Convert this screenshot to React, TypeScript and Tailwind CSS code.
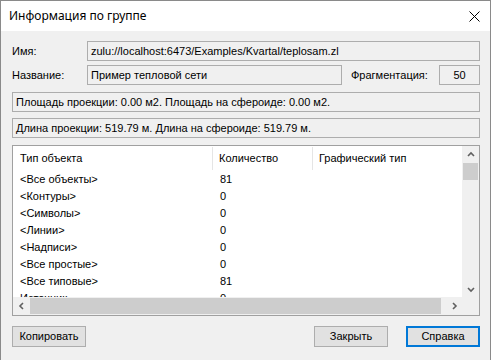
import React from "react";

const rows = [
  { name: "<Все объекты>", count: "81" },
  { name: "<Контуры>", count: "0" },
  { name: "<Символы>", count: "0" },
  { name: "<Линии>", count: "0" },
  { name: "<Надписи>", count: "0" },
  { name: "<Все простые>", count: "0" },
  { name: "<Все типовые>", count: "81" },
  { name: "Источник", count: "0" },
];

// small windows-10 style scrollbar arrow
function Arrow({ dir }: { dir: "up" | "down" | "left" | "right" }) {
  const pts = {
    up: "1,5 4,2 7,5",
    down: "1,3 4,6 7,3",
    left: "5,1 2,4 5,7",
    right: "3,1 6,4 3,7",
  }[dir];
  return (
    <svg width="8" height="8" viewBox="0 0 8 8">
      <polyline points={pts} fill="none" stroke="#606060" strokeWidth="1.6" />
    </svg>
  );
}

function Field({ children, className = "" }: { children?: React.ReactNode; className?: string }) {
  return (
    <div className={"h-[20px] flex items-center border border-[#adadad] bg-[#f0f0f0] px-[3px] whitespace-nowrap overflow-hidden " + className}>
      {children}
    </div>
  );
}

function Btn({ label, active = false }: { label: string; active?: boolean }) {
  return (
    <div
      className={
        "w-[74px] h-[21px] flex items-center justify-center bg-[#e1e1e1] " +
        (active ? "border-2 border-[#0078d7]" : "border border-[#adadad]")
      }
    >
      {label}
    </div>
  );
}

export default function App() {
  return (
    <div
      className="w-[491px] h-[360px] bg-[#f0f0f0] border-x border-t border-[#8a8a8a] flex flex-col text-[11px] text-black overflow-hidden"
      style={{ fontFamily: '"Liberation Sans", Arial, sans-serif' }}
    >
      {/* title bar */}
      <div className="h-[30px] bg-white flex items-center justify-between pl-[8px] pr-[10px] shrink-0">
        <span className="text-[12px]" style={{ fontFamily: '"Noto Sans", sans-serif' }}>
          Информация по группе
        </span>
        <svg width="11" height="11" viewBox="0 0 11 11">
          <path d="M0.5 0.5 L10.5 10.5 M10.5 0.5 L0.5 10.5" stroke="#000" strokeWidth="1" />
        </svg>
      </div>

      <div className="flex flex-col pl-[11px] pr-[10px] pt-[10px]">
        <div className="flex items-center h-[20px]">
          <span className="w-[75px]">Имя:</span>
          <Field className="flex-1">zulu://localhost:6473/Examples/Kvartal/teplosam.zl</Field>
        </div>

        <div className="flex items-center h-[20px] mt-[4px]">
          <span className="w-[75px]">Название:</span>
          <Field className="w-[255px]">Пример тепловой сети</Field>
          <span className="ml-[9px] flex-1">Фрагментация:</span>
          <Field className="w-[41px] justify-center">50</Field>
        </div>

        <Field className="mt-[7px]">Площадь проекции: 0.00 м2. Площадь на сфероиде: 0.00 м2.</Field>
        <Field className="mt-[6px]">Длина проекции: 519.79 м. Длина на сфероиде: 519.79 м.</Field>

        {/* object list */}
        <div className="mt-[7px] h-[171px] border border-[#a0a0a0] bg-white flex flex-col">
          <div className="flex h-[151px]">
            <div className="flex-1 overflow-hidden">
              <div className="flex h-[25px]">
                <div className="w-[200px] flex items-center pl-[7px] border-r border-[#e5e5e5] my-[1px]">Тип объекта</div>
                <div className="w-[100px] flex items-center pl-[6px] border-r border-[#e5e5e5] my-[1px]">Количество</div>
                <div className="flex-1 flex items-center pl-[6px]">Графический тип</div>
              </div>
              {rows.map((r) => (
                <div key={r.name} className="flex h-[17px] items-center">
                  <div className="w-[200px] pl-[7px]">{r.name}</div>
                  <div className="w-[100px] pl-[7px]">{r.count}</div>
                </div>
              ))}
            </div>
            <div className="w-[17px] bg-[#f0f0f0] flex flex-col">
              <div className="h-[17px] flex items-center justify-center">
                <Arrow dir="up" />
              </div>
              <div className="h-[17px] mx-[1px] bg-[#cdcdcd]" />
              <div className="flex-1" />
              <div className="h-[17px] flex items-center justify-center">
                <Arrow dir="down" />
              </div>
            </div>
          </div>
          <div className="flex h-[18px] bg-[#f0f0f0]">
            <div className="w-[17px] flex items-center justify-center">
              <Arrow dir="left" />
            </div>
            <div className="w-[411px] my-[1px] bg-[#cdcdcd]" />
            <div className="flex-1" />
            <div className="w-[17px] flex items-center justify-center">
              <Arrow dir="right" />
            </div>
            <div className="w-[17px]" />
          </div>
        </div>

        <div className="flex items-center mt-[10px]">
          <Btn label="Копировать" />
          <div className="flex-1" />
          <Btn label="Закрыть" />
          <div className="w-[18px]" />
          <Btn label="Справка" active />
        </div>
      </div>
    </div>
  );
}
